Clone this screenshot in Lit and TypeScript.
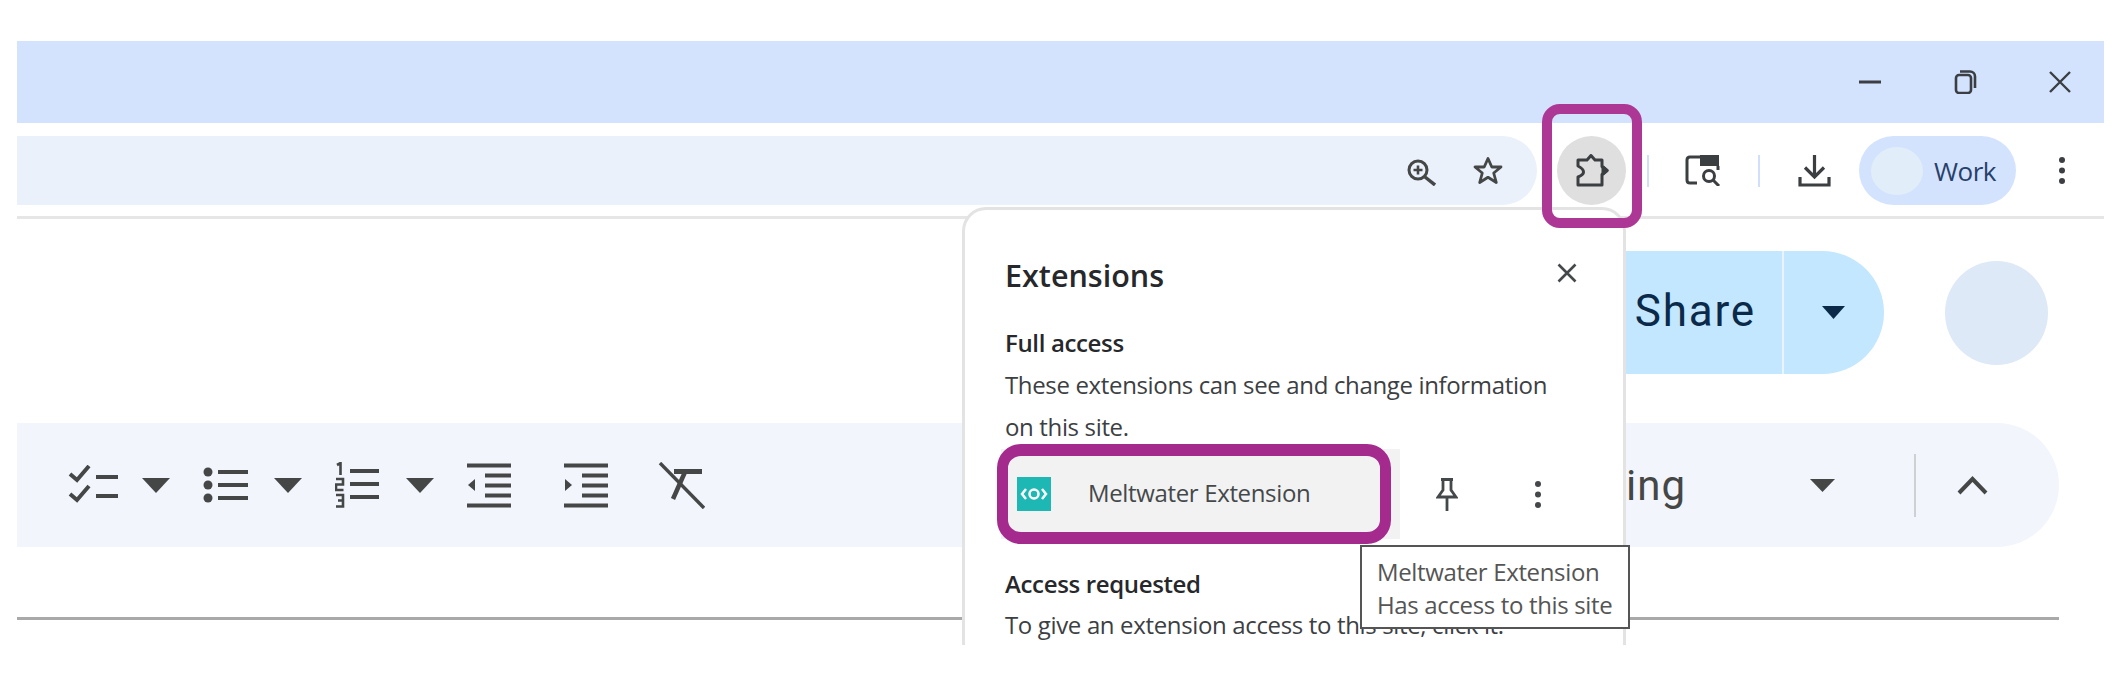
import { LitElement, html, css } from 'lit'
import { customElement } from 'lit/decorators.js'

const arrow = html`<svg class="arrow" width="28" height="15" viewBox="0 0 28 15"><path d="M0 0H28L14 15z" fill="currentColor"/></svg>`

@customElement('app-root')
export class AppRoot extends LitElement {
  static styles = css`
    :host {
      display: block;
      position: relative;
      width: 2124px;
      height: 684px;
      overflow: hidden;
      background: #fff;
      font-family: 'Roboto', sans-serif;
    }
    svg { display: block; flex: none; }

    .frame { width: 2087px; margin-left: 17px; padding-top: 41px; }

    .tabbar {
      height: 82px;
      background: #d3e3fd;
      display: flex;
      align-items: center;
      justify-content: flex-end;
      gap: 71px;
      padding-right: 32px;
      color: #3b3f44;
    }

    .browserbar {
      height: 96px;
      box-sizing: border-box;
      padding-top: 13px;
      display: flex;
      align-items: flex-start;
      border-bottom: 3px solid #e6e6e6;
      border-radius: 0 14px 0 0;
      background: #fff;
      color: #444746;
    }
    .address {
      width: 1520px;
      height: 69px;
      background: #eaf1fa;
      border-radius: 0 35px 35px 0;
      display: flex;
      align-items: center;
      justify-content: flex-end;
      gap: 37px;
      padding-right: 34px;
      box-sizing: border-box;
    }
    .ext {
      position: relative;
      width: 69px;
      height: 69px;
      margin-left: 20px;
      border-radius: 50%;
      background: #dfdfdf;
      display: flex;
      align-items: center;
      justify-content: center;
    }
    .ext-mark {
      position: absolute;
      top: -32px;
      bottom: -23px;
      left: -15px;
      right: -16px;
      border: 10px solid #ad3795;
      border-radius: 18px;
      z-index: 5;
    }
    .sep { width: 2px; height: 32px; margin-top: 19px; background: #cfe0fb; flex: none; }
    .tool { margin-top: 19px; }
    .pill {
      width: 157px;
      height: 69px;
      margin-left: 28px;
      background: #d3e3fd;
      border-radius: 35px;
      display: flex;
      align-items: center;
      box-sizing: border-box;
      padding-left: 12px;
    }
    .avatar-small { width: 52px; height: 48px; border-radius: 50%; background: #e1edf8; flex: none; }
    .pill span {
      margin-left: 11px;
      font-size: 26px;
      letter-spacing: -0.5px;
      color: #27406b;
      font-family: 'Open Sans', sans-serif;
    }

    .share-row {
      display: flex;
      justify-content: flex-end;
      align-items: center;
      margin-top: 32px;
      padding-right: 56px;
      height: 123px;
    }
    .share {
      display: flex;
      height: 123px;
      background: #c2e7ff;
      color: #0b2a4a;
      border-radius: 62px;
      margin-right: 61px;
      overflow: hidden;
    }
    .share-main {
      width: 240px;
      box-sizing: border-box;
      padding-right: 26px;
      text-align: right;
      font-size: 44px;
      line-height: 120px;
      letter-spacing: 1.800px;
    }
    .share-more {
      width: 102px;
      border-left: 2px solid #e8f5ff;
      display: flex;
      align-items: center;
      box-sizing: border-box;
      padding-left: 38px;
    }
    .avatar { width: 103px; height: 104px; border-radius: 50%; background: #dde9f7; }

    .format {
      width: 2042px;
      height: 124px;
      margin-top: 49px;
      background: #f3f5fc;
      border-radius: 0 62px 62px 0;
      display: flex;
      align-items: center;
      color: #444746;
    }
    .mode {
      margin-left: auto;
      font-size: 42px;
      letter-spacing: 1px;
      color: #444746;
    }
    .format .split { width: 2px; height: 63px; background: #cfd0d4; margin-left: 79px; }
    .rule { width: 2042px; height: 3px; margin-top: 70px; background: #a9a9a9; }

    .popup {
      position: absolute;
      left: 962px;
      top: 207px;
      width: 664px;
      height: 438px;
      box-sizing: border-box;
      overflow: hidden;
      background: #fff;
      border: 3px solid #e3e3e3;
      border-bottom: none;
      border-radius: 24px 24px 0 0;
      padding: 43px 0 0 40px;
      z-index: 2;
      font-family: 'Open Sans', sans-serif;
      color: #3c4043;
      font-size: 24px;
      letter-spacing: -0.350px;
      line-height: 42px;
    }
    .popup-head { display: flex; align-items: center; height: 44px; }
    .popup-head h2 {
      margin: 0;
      font-size: 30.500px;
      font-weight: 600;
      letter-spacing: 0;
      color: #26282b;
    }
    .popup-head svg { margin-left: auto; margin-right: 46px; margin-top: -5px; }
    .label { font-weight: 600; color: #26282b; }
    .full { margin-top: 25px; }
    .item { display: flex; align-items: center; height: 90px; margin-left: -4px; margin-top: 1px; }
    .item-main {
      position: relative;
      width: 399px;
      height: 90px;
      background: #f2f2f2;
      display: flex;
      align-items: center;
      padding-left: 16px;
      box-sizing: border-box;
      flex: none;
    }
    .item-main span { margin-left: 37px; margin-top: -2px; color: #45484b; }
    .item-mark {
      position: absolute;
      top: -5px;
      bottom: -5px;
      left: -4px;
      right: 9px;
      border-style: solid;
      border-color: #a42a8e;
      border-width: 12px 11px;
      border-radius: 24px;
    }
    .requested { margin-top: 24px; }
    .hint { margin-top: -1px; }

    .tip {
      position: absolute;
      left: 1360px;
      top: 545px;
      width: 270px;
      height: 84px;
      box-sizing: border-box;
      background: #fff;
      border: 2px solid #555;
      padding: 8px 0 0 15px;
      z-index: 3;
      font-family: 'Open Sans', sans-serif;
      font-size: 24px;
      letter-spacing: -0.350px;
      line-height: 33px;
      color: #555;
      white-space: nowrap;
    }
  `

  render() {
    return html`
      <div class="frame">
        <div class="tabbar">
          <svg width="24" height="24" viewBox="0 0 24 24"><path d="M1 12H23" stroke="currentColor" stroke-width="3"/></svg>
          <svg width="24" height="24" viewBox="0 0 24 24" fill="none" stroke="currentColor" stroke-width="2.600"><rect x="3" y="5" width="15" height="18" rx="3"/><path d="M7 1.500H17a5 5 0 0 1 5 5V18"/></svg>
          <svg width="24" height="24" viewBox="0 0 24 24"><path d="M2 2L22 22M22 2L2 22" stroke="currentColor" stroke-width="2.400" fill="none"/></svg>
        </div>

        <div class="browserbar">
          <div class="address">
            <svg width="29" height="27" viewBox="0 0 29 27" style="margin-top:3px" fill="none" stroke="currentColor"><circle cx="11" cy="11" r="9" stroke-width="3"/><path d="M18 18L28 26" stroke-width="3.400"/><path d="M6.500 11H15.500M11 6.500V15.500" stroke-width="2.600"/></svg>
            <svg width="30" height="29" viewBox="0 0 30 29" fill="none" stroke="currentColor" stroke-width="2.800" stroke-linejoin="round"><path d="M15 2.500L18.800 11H28L20.700 17L23.300 26.500L15 21.300L6.700 26.500L9.300 17L2 11H11.200z"/></svg>
          </div>
          <div class="ext">
            <svg width="34" height="33" viewBox="0 0 34 33" fill="none" stroke="#3c3f42" stroke-width="3" stroke-linejoin="round"><path d="M3 6H12L16 1.500L20 6H27V12.500L32 16.500L27 20.500V31H3V23C7 21.500 8.500 20 8.500 18S7 14 3 12z"/><path d="M28 13L32 16.500L28 20z" fill="#3c3f42"/></svg>
            <div class="ext-mark"></div>
          </div>
          <div class="sep" style="margin-left:21px"></div>
          <svg class="tool" style="margin-left:36px" width="36" height="31" viewBox="0 0 36 31" fill="none" stroke="#3c3f42" stroke-width="3"><path d="M15 2H5Q2 2 2 5V25Q2 28 5 28H12"/><rect x="15" y="0" width="19" height="11" fill="#3c3f42" stroke="none"/><path d="M33 11V15"/><circle cx="24" cy="21" r="5.500"/><path d="M28 25L34 31"/></svg>
          <div class="sep" style="margin-left:37px"></div>
          <svg class="tool" style="margin-left:38px" width="33" height="32" viewBox="0 0 33 32" fill="none" stroke="#3c3f42" stroke-width="3.200"><path d="M16.500 0V21M7 12.500L16.500 22L26 12.500"/><path d="M2 22V30H31V22"/></svg>
          <div class="pill">
            <div class="avatar-small"></div>
            <span>Work</span>
          </div>
          ${this.dots('margin-left:42px;margin-top:20px', '#3c3f42')}
        </div>

        <div class="share-row">
          <div class="share">
            <div class="share-main">Share</div>
            <div class="share-more"><svg width="23" height="13" viewBox="0 0 23 13"><path d="M0 0H23L11.500 13z" fill="currentColor"/></svg></div>
          </div>
          <div class="avatar"></div>
        </div>

        <div class="format">
          ${this.checklist()}
          <span style="margin-left:24px">${arrow}</span>
          ${this.bullets()}
          <span style="margin-left:26px">${arrow}</span>
          ${this.numbers()}
          <span style="margin-left:27px">${arrow}</span>
          ${this.indent(true)}
          ${this.indent(false)}
          ${this.clearFormat()}
          <span class="mode">Editing</span>
          <svg style="margin-left:124px" width="25" height="13" viewBox="0 0 25 13"><path d="M0 0H25L12.500 13z" fill="currentColor"/></svg>
          <div class="split"></div>
          <svg style="margin:0 71px 0 41px" width="31" height="20" viewBox="0 0 31 20" fill="none" stroke="currentColor" stroke-width="4"><path d="M2 18L15.500 4L29 18"/></svg>
        </div>

        <div class="rule"></div>
      </div>

      <div class="popup">
        <div class="popup-head">
          <h2>Extensions</h2>
          <svg width="20" height="20" viewBox="0 0 20 20"><path d="M1.500 1.500L18.500 18.500M18.500 1.500L1.500 18.500" stroke="#46494c" stroke-width="2.600"/></svg>
        </div>
        <div class="label full">Full access</div>
        <div>These extensions can see and change information</div>
        <div>on this site.</div>
        <div class="item">
          <div class="item-main">
            <svg width="34" height="34" viewBox="0 0 34 34"><rect width="34" height="34" fill="#1db8b4"/><g fill="none" stroke="#fff" stroke-width="2.500"><circle cx="17" cy="17" r="4.500"/><path d="M9 12L5 17L9 22M25 12L29 17L25 22"/></g></svg>
            <span>Meltwater Extension</span>
            <div class="item-mark"></div>
          </div>
          <svg style="margin-left:36px" width="22" height="33" viewBox="0 0 22 33" fill="none" stroke="#45484b" stroke-width="2.800"><path d="M5 1.500H17M7 1.500V12L2 19H20L15 12V1.500M11 19V33"/></svg>
          ${this.dots('margin-left:76px', '#45484b')}
        </div>
        <div class="label requested">Access requested</div>
        <div class="hint">To give an extension access to this site, click it.</div>
      </div>

      <div class="tip">Meltwater Extension<br />Has access to this site</div>
    `
  }

  dots(style: string, color: string) {
    return html`<svg class="dots" style=${style} width="8" height="29" viewBox="0 0 8 29" fill=${color}><circle cx="4" cy="4" r="3"/><circle cx="4" cy="14.500" r="3"/><circle cx="4" cy="25" r="3"/></svg>`
  }

  checklist() {
    return html`<svg style="margin-left:51px" width="50" height="40" viewBox="0 0 50 40" fill="none" stroke="currentColor" stroke-width="4"><path d="M2 9L9 15L21 1M2 29L9 35L21 21M28 12H50M28 31H50"/></svg>`
  }

  bullets() {
    return html`<svg style="margin-left:33px" width="45" height="38" viewBox="0 0 45 38"><g fill="currentColor"><circle cx="5" cy="6" r="4.500"/><circle cx="5" cy="19" r="4.500"/><circle cx="5" cy="32" r="4.500"/></g><path d="M15 6H45M15 19H45M15 32H45" stroke="currentColor" stroke-width="4"/></svg>`
  }

  numbers() {
    return html`<svg style="margin-left:33px" width="44" height="46" viewBox="0 0 44 46" fill="none" stroke="currentColor"><path d="M2 3L5.500 1V13M1 17H8V22.500H1V28H8.500M1 33H8V38.500H3M8 38.500V44.500H1" stroke-width="2.600"/><path d="M15 9H44M15 22H44M15 35H44" stroke-width="4"/></svg>`
  }

  indent(out: boolean) {
    const head = out ? 'M8 16V28L1 22z' : 'M1 16V28L8 22z'
    return html`<svg style="margin-left:${out ? 33 : 53}px" width="44" height="45" viewBox="0 0 44 45"><path d=${head} fill="currentColor"/><path d="M0 2.500H44M0 42.500H44M18 12.500H44M18 22.500H44M18 32.500H44" stroke="currentColor" stroke-width="4"/></svg>`
  }

  clearFormat() {
    return html`<svg style="margin-left:50px" width="47" height="47" viewBox="0 0 47 47" fill="none" stroke="currentColor"><path d="M2 1L46 46" stroke-width="3.400"/><path d="M16 9.500H44" stroke-width="5"/><path d="M27 10L15 37" stroke-width="4.500"/></svg>`
  }
}
